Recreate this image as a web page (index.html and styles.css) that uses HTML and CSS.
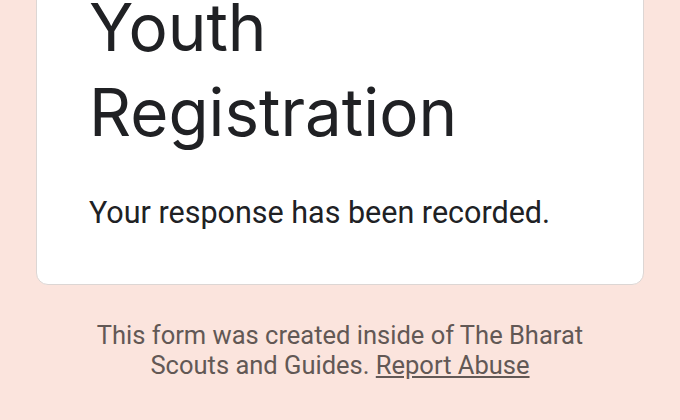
FILE: index.html
```html
<!DOCTYPE html>
<html lang="en">
<head>
    <meta charset="UTF-8">
    <meta name="viewport" content="width=device-width, initial-scale=1.0">
    <title>Youth Registration</title>
    <link rel="stylesheet" href="styles.css">
</head>
<body>
    <div class="page">
        <div class="card">
            <h1 class="title">Youth Registration</h1>
            <p class="message">Your response has been recorded.</p>
        </div>
        <p class="footer">
            This form was created inside of The Bharat Scouts and Guides. <a href="#">Report Abuse</a>
        </p>
    </div>
</body>
</html>
```

FILE: styles.css
```css
body {
    margin: 0;
    background-color: #fbe4dd;
    font-family: Roboto, "Liberation Sans", sans-serif;
    overflow: hidden;
}
.page {
    padding: 0 36px;
    margin-top: -46px;
}
.card {
    background: #ffffff;
    border: 1px solid #dcd6d4;
    border-radius: 12px;
    padding: 30px 52px 51px;
}
.title {
    margin: 0;
    font-family: Inter, Roboto, sans-serif;
    font-weight: 400;
    font-size: 65.5px;
    line-height: 85px;
    color: #202124;
}
.message {
    margin: 38px 0 0;
    font-size: 30.5px;
    line-height: 40px;
    color: #202124;
}
.footer {
    max-width: 530px;
    margin: 35px auto 0;
    text-align: center;
    font-size: 25.5px;
    line-height: 30px;
    color: #625855;
}
.footer a {
    color: #625855;
    text-decoration: underline;
}
```
